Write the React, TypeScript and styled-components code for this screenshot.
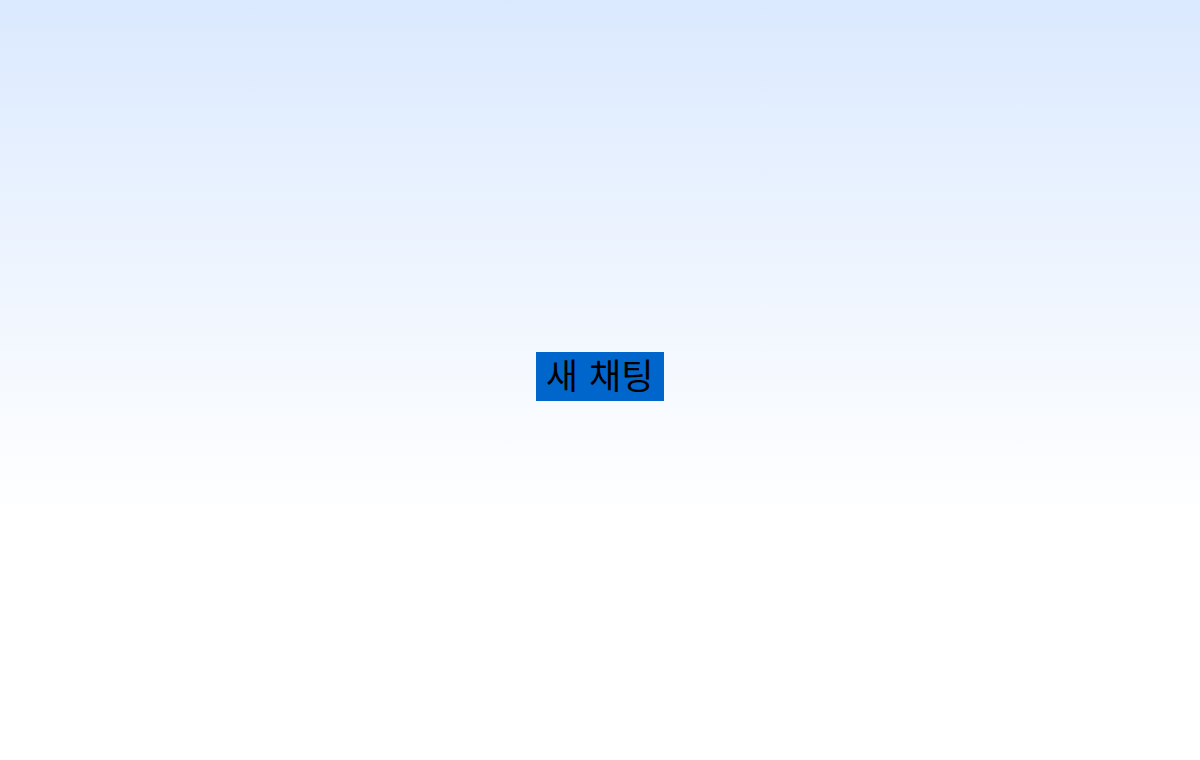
import { createGlobalStyle, styled } from "styled-components"

const GlobalStyle = createGlobalStyle`
  html, body {
    margin: 0;
    padding: 0;
  }
  body {
    font-family: "DejaVu Sans", "Noto Sans CJK KR", sans-serif;
  }
`

const Page = styled.div`
  width: 100%;
  min-height: 100vh;
  background: linear-gradient(to bottom, #dbe9fe 0px, #ffffff 520px);
  display: flex;
  align-items: center;
  justify-content: center;
`

const NewChatButton = styled.button`
  background-color: #0066cc;
  color: #000000;
  border: none;
  margin: 0 0 8px 0;
  padding: 0 11px 0 10px;
  height: 49px;
  font-family: "DejaVu Sans", "Noto Sans CJK KR", sans-serif;
  font-size: 35px;
  line-height: 50px;
  cursor: pointer;
`

export default function App() {
  return (
    <>
      <GlobalStyle />
      <Page>
        <NewChatButton>새 채팅</NewChatButton>
      </Page>
    </>
  )
}
